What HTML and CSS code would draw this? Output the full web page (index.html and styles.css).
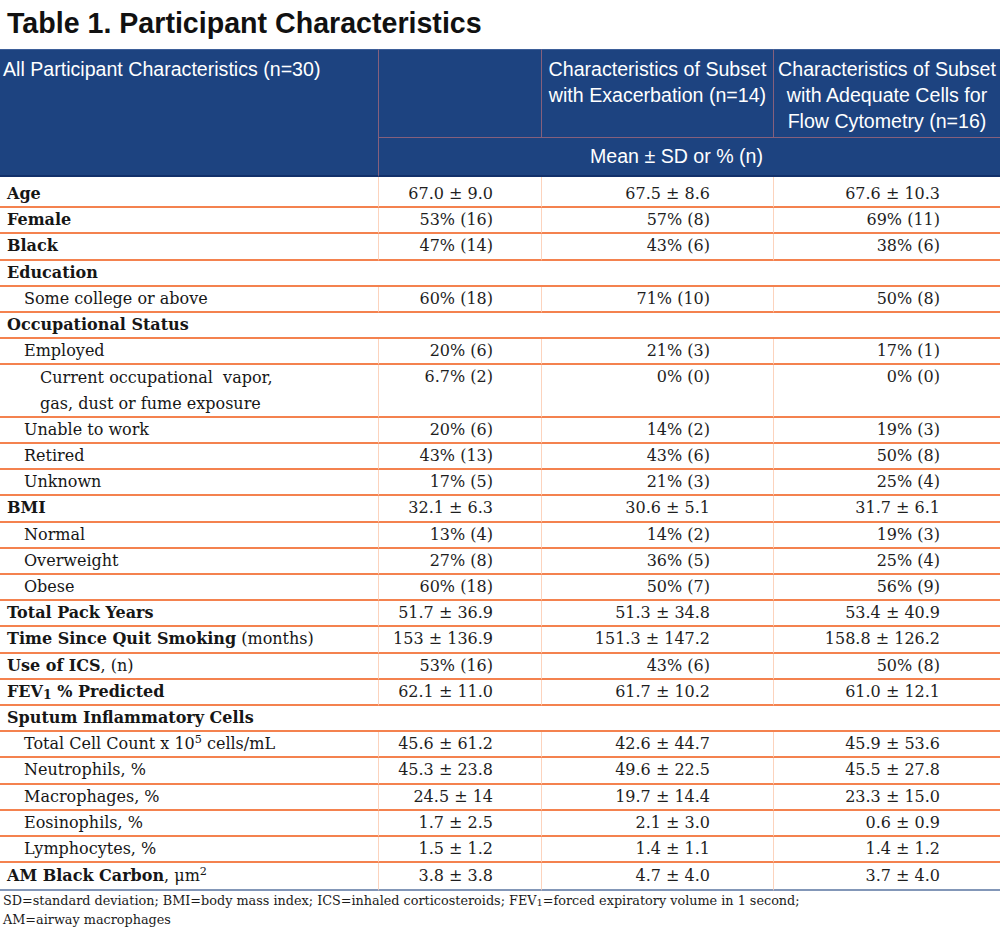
FILE: index.html
```html
<!DOCTYPE html>
<html lang="en">
<head>
<meta charset="utf-8">
<title>Table 1. Participant Characteristics</title>
<link rel="stylesheet" href="styles.css">
</head>
<body>
<h1 class="title">Table 1. Participant Characteristics</h1>
<table class="tbl">
  <colgroup>
    <col class="c1"><col class="c2"><col class="c3"><col class="c4">
  </colgroup>
  <thead>
    <tr class="h1row">
      <th class="hcell hfirst" rowspan="2">All Participant Characteristics (n=30)</th>
      <th class="hcell hsep"></th>
      <th class="hcell hsep hcenter">Characteristics of Subset<br>with Exacerbation (n=14)</th>
      <th class="hcell hsep hcenter">Characteristics of Subset<br>with Adequate Cells for<br>Flow Cytometry (n=16)</th>
    </tr>
    <tr class="h2row">
      <th class="hcell hsep hmean" colspan="3">Mean ± SD or % (n)</th>
    </tr>
  </thead>
  <tbody>
    <tr class="first"><td class="lab b">Age</td><td class="v v2">67.0 ± 9.0</td><td class="v v3">67.5 ± 8.6</td><td class="v v4">67.6 ± 10.3</td></tr>
    <tr><td class="lab b">Female</td><td class="v v2">53% (16)</td><td class="v v3">57% (8)</td><td class="v v4">69% (11)</td></tr>
    <tr><td class="lab b">Black</td><td class="v v2">47% (14)</td><td class="v v3">43% (6)</td><td class="v v4">38% (6)</td></tr>
    <tr><td class="lab b" colspan="4">Education</td></tr>
    <tr><td class="lab i1">Some college or above</td><td class="v v2">60% (18)</td><td class="v v3">71% (10)</td><td class="v v4">50% (8)</td></tr>
    <tr><td class="lab b" colspan="4">Occupational Status</td></tr>
    <tr><td class="lab i1">Employed</td><td class="v v2">20% (6)</td><td class="v v3">21% (3)</td><td class="v v4">17% (1)</td></tr>
    <tr class="tall"><td class="lab i2">Current occupational&nbsp; vapor,<br>gas, dust or fume exposure</td><td class="v v2">6.7% (2)</td><td class="v v3">0% (0)</td><td class="v v4">0% (0)</td></tr>
    <tr><td class="lab i1">Unable to work</td><td class="v v2">20% (6)</td><td class="v v3">14% (2)</td><td class="v v4">19% (3)</td></tr>
    <tr><td class="lab i1">Retired</td><td class="v v2">43% (13)</td><td class="v v3">43% (6)</td><td class="v v4">50% (8)</td></tr>
    <tr><td class="lab i1">Unknown</td><td class="v v2">17% (5)</td><td class="v v3">21% (3)</td><td class="v v4">25% (4)</td></tr>
    <tr><td class="lab b">BMI</td><td class="v v2">32.1 ± 6.3</td><td class="v v3">30.6 ± 5.1</td><td class="v v4">31.7 ± 6.1</td></tr>
    <tr><td class="lab i1">Normal</td><td class="v v2">13% (4)</td><td class="v v3">14% (2)</td><td class="v v4">19% (3)</td></tr>
    <tr><td class="lab i1">Overweight</td><td class="v v2">27% (8)</td><td class="v v3">36% (5)</td><td class="v v4">25% (4)</td></tr>
    <tr><td class="lab i1">Obese</td><td class="v v2">60% (18)</td><td class="v v3">50% (7)</td><td class="v v4">56% (9)</td></tr>
    <tr><td class="lab b">Total Pack Years</td><td class="v v2">51.7 ± 36.9</td><td class="v v3">51.3 ± 34.8</td><td class="v v4">53.4 ± 40.9</td></tr>
    <tr><td class="lab"><strong>Time Since Quit Smoking</strong> (months)</td><td class="v v2">153 ± 136.9</td><td class="v v3">151.3 ± 147.2</td><td class="v v4">158.8 ± 126.2</td></tr>
    <tr><td class="lab"><strong>Use of ICS</strong>, (n)</td><td class="v v2">53% (16)</td><td class="v v3">43% (6)</td><td class="v v4">50% (8)</td></tr>
    <tr><td class="lab b">FEV<sub class="lowsub">1</sub> % Predicted</td><td class="v v2">62.1 ± 11.0</td><td class="v v3">61.7 ± 10.2</td><td class="v v4">61.0 ± 12.1</td></tr>
    <tr><td class="lab b" colspan="4">Sputum Inflammatory Cells</td></tr>
    <tr><td class="lab i1">Total Cell Count x 10<sup>5</sup> cells/mL</td><td class="v v2">45.6 ± 61.2</td><td class="v v3">42.6 ± 44.7</td><td class="v v4">45.9 ± 53.6</td></tr>
    <tr><td class="lab i1">Neutrophils, %</td><td class="v v2">45.3 ± 23.8</td><td class="v v3">49.6 ± 22.5</td><td class="v v4">45.5 ± 27.8</td></tr>
    <tr><td class="lab i1">Macrophages, %</td><td class="v v2">24.5 ± 14</td><td class="v v3">19.7 ± 14.4</td><td class="v v4">23.3 ± 15.0</td></tr>
    <tr><td class="lab i1">Eosinophils, %</td><td class="v v2">1.7 ± 2.5</td><td class="v v3">2.1 ± 3.0</td><td class="v v4">0.6 ± 0.9</td></tr>
    <tr><td class="lab i1">Lymphocytes, %</td><td class="v v2">1.5 ± 1.2</td><td class="v v3">1.4 ± 1.1</td><td class="v v4">1.4 ± 1.2</td></tr>
    <tr class="last"><td class="lab"><strong>AM Black Carbon</strong>, μm<sup>2</sup></td><td class="v v2">3.8 ± 3.8</td><td class="v v3">4.7 ± 4.0</td><td class="v v4">3.7 ± 4.0</td></tr>
  </tbody>
</table>
<p class="note">SD=standard deviation; BMI=body mass index; ICS=inhaled corticosteroids; FEV<sub class="lowsub">1</sub>=forced expiratory volume in 1 second;<br>AM=airway macrophages</p>
</body>
</html>
```

FILE: styles.css
```css
html, body {
  margin: 0;
  padding: 0;
  background: #ffffff;
}

body {
  width: 1000px;
  color: #161616;
  font-family: "DejaVu Serif", serif;
}

.title {
  margin: 0 0 10px 0;
  padding: 7px 0 0 7px;
  font-family: "Liberation Sans", Arial, sans-serif;
  font-weight: bold;
  font-size: 28.6px;
  line-height: 32px;
  color: #111111;
}

.tbl {
  width: 1000px;
  table-layout: fixed;
  border-collapse: separate;
  border-spacing: 0;
}

.c1 { width: 378px; }
.c2 { width: 163px; }
.c3 { width: 232px; }
.c4 { width: 227px; }

/* header */
.hcell {
  background: #1d4380;
  color: #ffffff;
  font-family: "Liberation Sans", Arial, sans-serif;
  font-weight: normal;
  font-size: 19.6px;
  line-height: 26px;
  text-align: left;
  vertical-align: top;
  padding: 0;
  white-space: nowrap;
}

.h1row .hcell {
  border-top: 1px solid #3d5f99;
  padding-top: 6px;
  padding-bottom: 3px;
  height: 78px;
}

.hfirst {
  padding-left: 3px !important;
  border-bottom: 2px solid #12306a;
}

.hsep {
  border-left: 1px solid #86607c;
}

.hcenter {
  text-align: center;
}

.h2row .hcell {
  border-top: 1px solid #86607c;
  border-bottom: 2px solid #12306a;
  height: 37px;
  line-height: 37px;
}

.hmean {
  text-align: center;
  padding-right: 26px !important;
}

/* body */
td {
  padding: 0;
  font-size: 16px;
  line-height: 24.2px;
  vertical-align: top;
  border-bottom: 2px solid #f4824f;
  white-space: nowrap;
}

td + td {
  border-left: 1px solid #fcd3bd;
}

.first td {
  padding-top: 5px;
}

.tall .lab {
  line-height: 25.2px;
}

.last td {
  line-height: 26px;
  border-bottom: 2px solid #8397b8;
}

.lab {
  padding-left: 7px;
}

.lab.b,
.lab strong {
  font-weight: bold;
}

.lab.i1 { padding-left: 24px; }
.lab.i2 { padding-left: 40px; }

.v {
  text-align: right;
  color: #1e1e1e;
}

.v2 { padding-right: 48px; }
.v3 { padding-right: 63px; }
.v4 { padding-right: 60px; }

sub, sup {
  font-size: 0.7em;
  line-height: 0;
}

.lowsub {
  font-size: 0.78em;
  vertical-align: -0.15em;
}

.note {
  margin: 0;
  padding: 0 0 0 3px;
  font-family: "DejaVu Serif", serif;
  font-size: 12.8px;
  line-height: 19px;
  color: #1a1a1a;
}
```
